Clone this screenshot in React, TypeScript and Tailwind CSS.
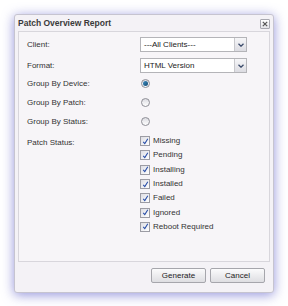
import React from 'react';

const STATUSES = ['Missing', 'Pending', 'Installing', 'Installed', 'Failed', 'Ignored', 'Reboot Required'];

function Select({ value }: { value: string }) {
  return (
    <div className="flex h-[15px] w-[107px] border border-[#b4b4b8] bg-white">
      <div className="flex flex-1 items-center px-[3px] text-[8px] text-[#222]">{value}</div>
      <div className="flex w-[12px] items-center justify-center border-l border-[#c8c8cc] bg-gradient-to-b from-[#f6f6f8] to-[#dcdce2]">
        <svg width="6" height="4" viewBox="0 0 6 4">
          <path d="M0.5 0.8 L3 3.2 L5.5 0.8" stroke="#3a4a6a" strokeWidth="1.3" fill="none" />
        </svg>
      </div>
    </div>
  );
}

function Radio({ checked }: { checked?: boolean }) {
  return (
    <div className="flex h-[9px] w-[9px] items-center justify-center rounded-full border border-[#8e8e96] bg-gradient-to-b from-[#dcdce2] to-white">
      {checked && <div className="h-[5px] w-[5px] rounded-full bg-gradient-to-br from-[#3f8fc4] to-[#154a72]" />}
    </div>
  );
}

function Check() {
  return (
    <div className="flex h-[10px] w-[10px] items-center justify-center border border-[#9c9ca4] bg-gradient-to-br from-[#dedee4] to-white">
      <svg width="7" height="7" viewBox="0 0 7 7">
        <path d="M1.2 3.8 L2.8 5.6 L5.8 0.8" stroke="#2a4fa8" strokeWidth="1.1" fill="none" />
      </svg>
    </div>
  );
}

function Label({ children }: { children: React.ReactNode }) {
  return <div className="w-[113px] shrink-0 text-[8px] text-[#333]">{children}</div>;
}

export default function App() {
  return (
    <div className="h-[306px] w-[288px] bg-white pl-[14px] pt-[14px] font-['Liberation_Sans',Arial,sans-serif]">
      <div className="flex h-[279px] w-[260px] flex-col rounded-[3px] border border-[#c6c4d0] bg-[#f4f2f6] shadow-[0_2px_12px_rgba(90,90,200,0.65)]">
        <div className="flex h-[16px] items-center justify-between pl-[3px] pr-[3px] pt-[1px]">
          <span className="text-[8.5px] font-bold text-[#3a3a3a]">Patch Overview Report</span>
          <div className="flex h-[10px] w-[10px] items-center justify-center rounded-[1px] border border-[#a8a8b0] bg-gradient-to-b from-white to-[#e4e4e8]">
            <svg width="6" height="6" viewBox="0 0 6 6">
              <path d="M0.8 0.8 L5.2 5.2 M5.2 0.8 L0.8 5.2" stroke="#555" strokeWidth="1.2" />
            </svg>
          </div>
        </div>
        <div className="mx-[3px] flex h-[231px] flex-col border border-[#d8d6dc] bg-[#f7f5f8] pl-[8px] pt-[5px]">
          <div className="flex h-[15px] items-center">
            <Label>Client:</Label>
            <Select value="---All Clients---" />
          </div>
          <div className="mt-[6px] flex h-[15px] items-center">
            <Label>Format:</Label>
            <Select value="HTML Version" />
          </div>
          <div className="mt-[1px] flex h-[19px] items-center">
            <Label>Group By Device:</Label>
            <div className="pl-[1px]"><Radio checked /></div>
          </div>
          <div className="flex h-[19px] items-center">
            <Label>Group By Patch:</Label>
            <div className="pl-[1px]"><Radio /></div>
          </div>
          <div className="flex h-[19px] items-center">
            <Label>Group By Status:</Label>
            <div className="pl-[1px]"><Radio /></div>
          </div>
          <div className="mt-[3px] flex">
            <div className="pt-[3px]"><Label>Patch Status:</Label></div>
            <div className="flex flex-col">
              {STATUSES.map((s) => (
                <div key={s} className="flex h-[14.3px] items-center gap-[3px]">
                  <Check />
                  <span className="text-[8px] text-[#333]">{s}</span>
                </div>
              ))}
            </div>
          </div>
        </div>
        <div className="flex justify-end gap-[4px] pr-[8px] pt-[6px]">
          {['Generate', 'Cancel'].map((b) => (
            <div
              key={b}
              className="flex h-[15px] w-[55px] items-center justify-center rounded-[2px] border border-[#a6a6ac] bg-gradient-to-b from-[#fbfbfc] to-[#dedee2] text-[8px] text-[#222]"
            >
              {b}
            </div>
          ))}
        </div>
      </div>
    </div>
  );
}
